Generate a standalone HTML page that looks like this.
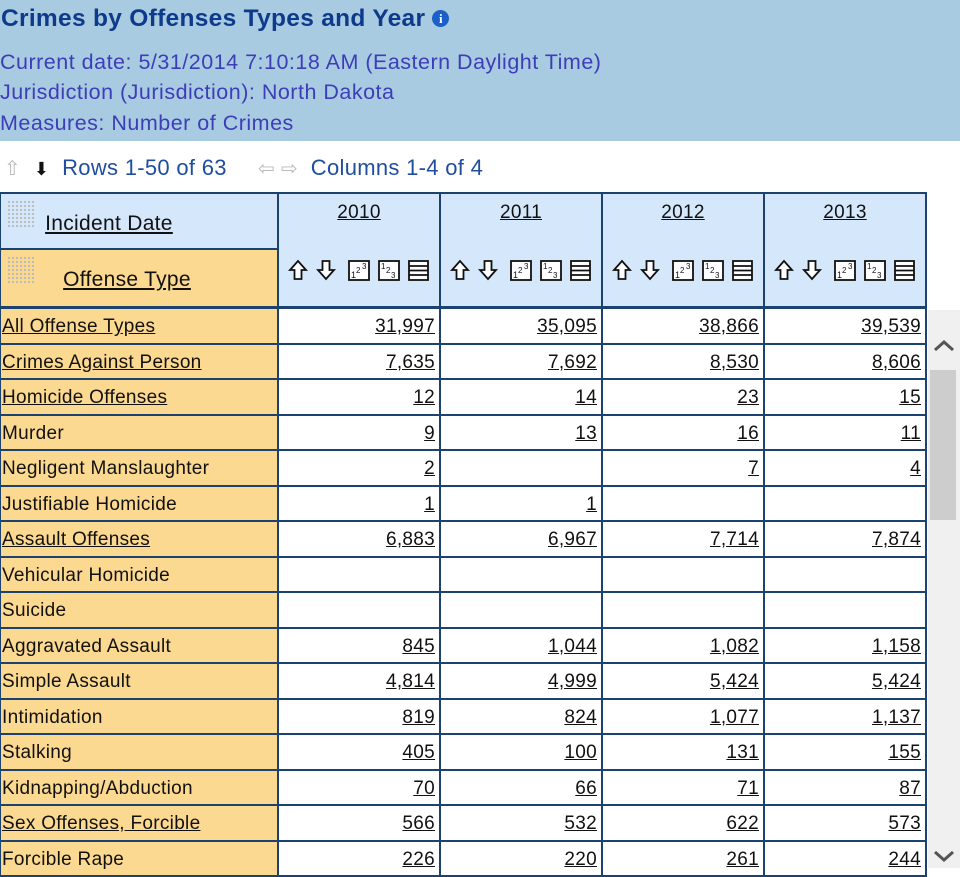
<!DOCTYPE html>
<html><head><meta charset="utf-8"><style>
body{margin:0;width:960px;height:868px;overflow:hidden;background:#fff;font-family:"Liberation Sans",sans-serif;position:relative}
.hdr{position:absolute;left:0;top:0;width:960px;height:141px;background:#a9cbe2}
.t{position:absolute;left:1px;top:5px;font-size:24.5px;font-weight:bold;color:#0d3a8a;letter-spacing:0.3px}
.i{display:inline-block;width:17px;height:17px;border-radius:50%;background:#1b5fc8;color:#fff;font-size:13px;text-align:center;line-height:17px;vertical-align:3px;font-family:"Liberation Serif",serif;font-weight:bold}
.l{position:absolute;left:0;font-size:21.5px;color:#3d3db8;letter-spacing:0.5px}
.nav{position:absolute;top:155px;font-size:22px;color:#1f4da0;letter-spacing:0.3px}
table{position:absolute;left:-1px;top:192px;border-collapse:collapse;table-layout:fixed;font-size:19px;color:#111;letter-spacing:0.3px}
td{border:2px solid #1c4270;padding:0 3px;white-space:nowrap;overflow:hidden}
td.n{text-align:right;text-decoration:underline;padding-right:4px}
td.a{background:#fcd990;padding-left:1px}
.u{text-decoration:underline}
tr.d td{height:30.5px;padding-top:3px}
.yh{background:#d5e8fb;vertical-align:top;text-align:center;padding:0}
.yt{margin-top:8px;text-decoration:underline;font-size:19px}
.ic{margin-top:35px;display:flex;justify-content:center}
.grid{display:inline-block;width:28px;height:28px;background-image:radial-gradient(#bbb 1px,transparent 1.3px);background-size:4px 4px;vertical-align:top}
.sb{position:absolute;left:928px;top:310px;width:32px;height:558px;background:#f0f0f0}
.th{position:absolute;left:930px;top:370px;width:26px;height:150px;background:#cdcdcd}
</style></head><body>
<svg width="0" height="0" style="position:absolute"><defs>
<g id="icons">
<path d="M10 2 L18 11 L13.5 11 L13.5 20 L6.5 20 L6.5 11 L2 11 Z" fill="#fff" stroke="#111" stroke-width="1.8"/>
<path d="M38 20 L46 11 L41.5 11 L41.5 2 L34.5 2 L34.5 11 L30 11 Z" fill="#fff" stroke="#111" stroke-width="1.8"/>
<rect x="61" y="2" width="20" height="19" fill="#fff" stroke="#111" stroke-width="1.8"/>
<text x="63" y="19" font-size="9" font-family="Liberation Sans" fill="#111">1</text><text x="68" y="14" font-size="8" font-family="Liberation Sans" fill="#111">2</text><text x="74" y="10" font-size="8" font-family="Liberation Sans" fill="#111">3</text>
<rect x="91" y="2" width="20" height="19" fill="#fff" stroke="#111" stroke-width="1.8"/>
<text x="93" y="10" font-size="8" font-family="Liberation Sans" fill="#111">1</text><text x="98" y="14" font-size="8" font-family="Liberation Sans" fill="#111">2</text><text x="103" y="19" font-size="8" font-family="Liberation Sans" fill="#111">3</text>
<rect x="121" y="2" width="19" height="19" fill="#fff" stroke="#111" stroke-width="1.8"/>
<path d="M121 7 H140 M121 11.5 H140 M121 16 H140" stroke="#111" stroke-width="1.8"/>
</g></defs></svg>
<div class="hdr">
<div class="t">Crimes by Offenses Types and Year <span class="i">i</span></div>
<div class="l" style="top:50px">Current date: 5/31/2014 7:10:18 AM (Eastern Daylight Time)</div>
<div class="l" style="top:80px">Jurisdiction (Jurisdiction): North Dakota</div>
<div class="l" style="top:111px">Measures: Number of Crimes</div>
</div>
<div class="nav" style="left:4px"><span style="color:#bbb;font-size:20px">&#x21E7;</span>&nbsp; <span style="color:#111;font-size:18px">&#x2B07;</span>&nbsp; Rows 1-50 of 63</div>
<div class="nav" style="left:258px"><span style="color:#bbb;font-size:20px">&#x21E6; &#x21E8;</span>&nbsp; Columns 1-4 of 4</div>
<table>
<colgroup><col style="width:278px"><col style="width:162px"><col style="width:162px"><col style="width:162px"><col style="width:162px"></colgroup>
<tr><td style="height:54px;background:#d5e8fb;font-size:21px;vertical-align:top;padding:0 6px"><span class="grid" style="margin-top:6px"></span> <span class="u" style="position:relative;top:18px;left:4px">Incident Date</span></td>
<td class="yh" rowspan="2" style="border-bottom-width:3px"><div class="yt">2010</div><div class="ic"><svg width="142" height="23"><use href="#icons"/></svg></div></td>
<td class="yh" rowspan="2" style="border-bottom-width:3px"><div class="yt">2011</div><div class="ic"><svg width="142" height="23"><use href="#icons"/></svg></div></td>
<td class="yh" rowspan="2" style="border-bottom-width:3px"><div class="yt">2012</div><div class="ic"><svg width="142" height="23"><use href="#icons"/></svg></div></td>
<td class="yh" rowspan="2" style="border-bottom-width:3px"><div class="yt">2013</div><div class="ic"><svg width="142" height="23"><use href="#icons"/></svg></div></td></tr>
<tr><td style="height:56px;background:#fcd990;font-size:21px;vertical-align:top;padding:0 6px;border-bottom-width:3px"><span class="grid" style="margin-top:6px"></span> <span class="u" style="position:relative;top:18px;left:22px">Offense Type</span></td></tr>
<tr class="d"><td class="a u">All Offense Types</td><td class="n">31,997</td><td class="n">35,095</td><td class="n">38,866</td><td class="n">39,539</td></tr>
<tr class="d"><td class="a u">Crimes Against Person</td><td class="n">7,635</td><td class="n">7,692</td><td class="n">8,530</td><td class="n">8,606</td></tr>
<tr class="d"><td class="a u">Homicide Offenses</td><td class="n">12</td><td class="n">14</td><td class="n">23</td><td class="n">15</td></tr>
<tr class="d"><td class="a">Murder</td><td class="n">9</td><td class="n">13</td><td class="n">16</td><td class="n">11</td></tr>
<tr class="d"><td class="a">Negligent Manslaughter</td><td class="n">2</td><td class="n"></td><td class="n">7</td><td class="n">4</td></tr>
<tr class="d"><td class="a">Justifiable Homicide</td><td class="n">1</td><td class="n">1</td><td class="n"></td><td class="n"></td></tr>
<tr class="d"><td class="a u">Assault Offenses</td><td class="n">6,883</td><td class="n">6,967</td><td class="n">7,714</td><td class="n">7,874</td></tr>
<tr class="d"><td class="a">Vehicular Homicide</td><td class="n"></td><td class="n"></td><td class="n"></td><td class="n"></td></tr>
<tr class="d"><td class="a">Suicide</td><td class="n"></td><td class="n"></td><td class="n"></td><td class="n"></td></tr>
<tr class="d"><td class="a">Aggravated Assault</td><td class="n">845</td><td class="n">1,044</td><td class="n">1,082</td><td class="n">1,158</td></tr>
<tr class="d"><td class="a">Simple Assault</td><td class="n">4,814</td><td class="n">4,999</td><td class="n">5,424</td><td class="n">5,424</td></tr>
<tr class="d"><td class="a">Intimidation</td><td class="n">819</td><td class="n">824</td><td class="n">1,077</td><td class="n">1,137</td></tr>
<tr class="d"><td class="a">Stalking</td><td class="n">405</td><td class="n">100</td><td class="n">131</td><td class="n">155</td></tr>
<tr class="d"><td class="a">Kidnapping/Abduction</td><td class="n">70</td><td class="n">66</td><td class="n">71</td><td class="n">87</td></tr>
<tr class="d"><td class="a u">Sex Offenses, Forcible</td><td class="n">566</td><td class="n">532</td><td class="n">622</td><td class="n">573</td></tr>
<tr class="d"><td class="a">Forcible Rape</td><td class="n">226</td><td class="n">220</td><td class="n">261</td><td class="n">244</td></tr>
</table>
<div class="sb"></div>
<div class="th"></div>
<svg style="position:absolute;left:932px;top:338px" width="24" height="16"><path d="M3 12 L12 4 L21 12" stroke="#555" stroke-width="3" fill="none"/></svg>
<svg style="position:absolute;left:932px;top:848px" width="24" height="16"><path d="M3 4 L12 12 L21 4" stroke="#555" stroke-width="3" fill="none"/></svg>
</body></html>
